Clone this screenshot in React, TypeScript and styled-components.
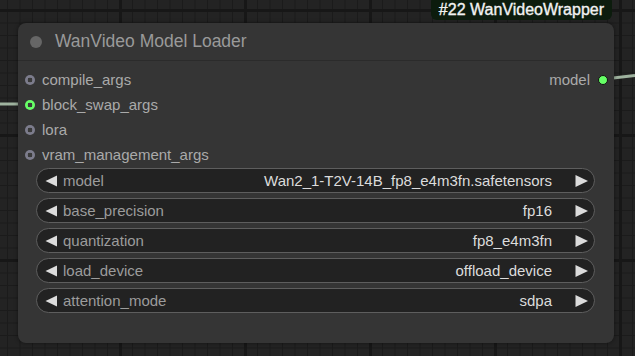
import React from "react";
import styled, { createGlobalStyle } from "styled-components";

const GlobalStyle = createGlobalStyle`
  html, body { margin: 0; padding: 0; background: #222; }
  body { font-family: "Liberation Sans", Arial, sans-serif; }
`;

const Canvas = styled.div`
  position: relative;
  width: 635px;
  height: 356px;
  overflow: hidden;
  box-sizing: border-box;
  padding: 23px 0 0 18px;
  background-color: #232323;
  background-image:
    linear-gradient(to right, #171717 3px, transparent 3px),
    linear-gradient(to bottom, #171717 3px, transparent 3px),
    linear-gradient(to right, #1b1b1b 1px, transparent 1px),
    linear-gradient(to bottom, #1b1b1b 1px, transparent 1px);
  background-size: 125px 125px, 125px 125px, 12.5px 12.5px, 12.5px 12.5px;
  background-position: 119px 0, 0 9px, 7px 0, 0 10px;
`;

const Wires = styled.svg`
  position: absolute;
  inset: 0;
  pointer-events: none;
`;

const Node = styled.div`
  position: relative;
  width: 596px;
  height: 320px;
  background: #353535;
  border-radius: 8px;
  box-shadow: 0 0 4px rgba(0, 0, 0, 0.45);
  display: flex;
  flex-direction: column;
`;

const Badge = styled.div`
  position: absolute;
  right: 2px;
  bottom: calc(100% + 3px);
  height: 24px;
  box-sizing: border-box;
  padding: 3px 8px 0 8px;
  display: flex;
  align-items: center;
  background: #0c1c0d;
  border-radius: 6px;
  color: #f2f2f2;
  font-size: 16px;
  -webkit-text-stroke: 0.35px #f2f2f2;
  white-space: nowrap;
`;

const TitleBar = styled.div`
  height: 38px;
  box-sizing: border-box;
  border-bottom: 1px solid #2b2b2b;
  display: flex;
  align-items: center;
  padding-left: 12px;
  gap: 13px;
`;

const TitleDot = styled.span`
  width: 12px;
  height: 12px;
  border-radius: 50%;
  background: #666;
`;

const Title = styled.span`
  color: #9a9a9a;
  font-size: 17.5px;
`;

const Slots = styled.div`
  display: flex;
  justify-content: space-between;
  padding-top: 6px;
`;

const SlotColumn = styled.div`
  display: flex;
  flex-direction: column;
`;

const SlotRow = styled.div<{ $out?: boolean }>`
  height: 25px;
  display: flex;
  align-items: center;
  gap: ${(p) => (p.$out ? "8px" : "7px")};
  padding: ${(p) => (p.$out ? "0 6px 0 0" : "0 0 0 7px")};
  flex-direction: ${(p) => (p.$out ? "row-reverse" : "row")};
  color: #aaa;
  font-size: 15px;
`;

const SlotDot = styled.span<{ $color: string; $filled?: boolean }>`
  width: 10px;
  height: 10px;
  box-sizing: border-box;
  border-radius: 50%;
  background: ${(p) =>
    p.$filled
      ? p.$color
      : `radial-gradient(circle, #3a3a3a 0 2.2px, ${p.$color} 2.6px)`};
  ${(p) => (p.$filled ? "border: 1px solid #111;" : "")}
  flex: none;
`;

const Widgets = styled.div`
  display: flex;
  flex-direction: column;
  gap: 5px;
  margin-top: 1px;
  padding: 0 19px 0 18px;
`;

const Widget = styled.div`
  height: 25px;
  box-sizing: border-box;
  border: 1px solid #5e5e5e;
  border-radius: 13px;
  background: #222;
  display: flex;
  align-items: center;
  padding: 0 6px 0 8px;
  font-size: 15px;
`;

const Label = styled.span`
  color: #9c9c9c;
  margin-left: 5px;
  flex: 1;
`;

const Value = styled.span`
  color: #dcdcdc;
  margin-right: 23px;
  white-space: nowrap;
`;

const Arrow = ({ dir }: { dir: "left" | "right" }) => (
  <svg width="13" height="12" viewBox="0 0 13 12" style={{ flex: "none" }}>
    {dir === "left" ? (
      <polygon points="12,0.5 12,11.5 0.5,6" fill="#dcdcdc" />
    ) : (
      <polygon points="0.5,0 0.5,12 13,6" fill="#dcdcdc" />
    )}
  </svg>
);

const inputs = [
  { name: "compile_args", color: "#7c7c8c", linked: false },
  { name: "block_swap_args", color: "#66ff66", linked: true },
  { name: "lora", color: "#7c7c8c", linked: false },
  { name: "vram_management_args", color: "#7c7c8c", linked: false },
];

const widgets = [
  { label: "model", value: "Wan2_1-T2V-14B_fp8_e4m3fn.safetensors" },
  { label: "base_precision", value: "fp16" },
  { label: "quantization", value: "fp8_e4m3fn" },
  { label: "load_device", value: "offload_device" },
  { label: "attention_mode", value: "sdpa" },
];

export default function App() {
  return (
    <>
      <GlobalStyle />
      <Canvas>
        <Wires width="635" height="356">
          <line x1="0" y1="104" x2="19" y2="104" stroke="#9fb39f" strokeWidth="3" />
          <path d="M613 78 L635 75.5" stroke="#9fb39f" strokeWidth="3" fill="none" />
        </Wires>
        <Node>
          <Badge>#22 WanVideoWrapper</Badge>
          <TitleBar>
            <TitleDot />
            <Title>WanVideo Model Loader</Title>
          </TitleBar>
          <Slots>
            <SlotColumn>
              {inputs.map((s) => (
                <SlotRow key={s.name}>
                  <SlotDot $color={s.color} />
                  <span>{s.name}</span>
                </SlotRow>
              ))}
            </SlotColumn>
            <SlotColumn>
              <SlotRow $out>
                <SlotDot $color="#66ff66" $filled />
                <span>model</span>
              </SlotRow>
            </SlotColumn>
          </Slots>
          <Widgets>
            {widgets.map((w) => (
              <Widget key={w.label}>
                <Arrow dir="left" />
                <Label>{w.label}</Label>
                <Value>{w.value}</Value>
                <Arrow dir="right" />
              </Widget>
            ))}
          </Widgets>
        </Node>
      </Canvas>
    </>
  );
}
